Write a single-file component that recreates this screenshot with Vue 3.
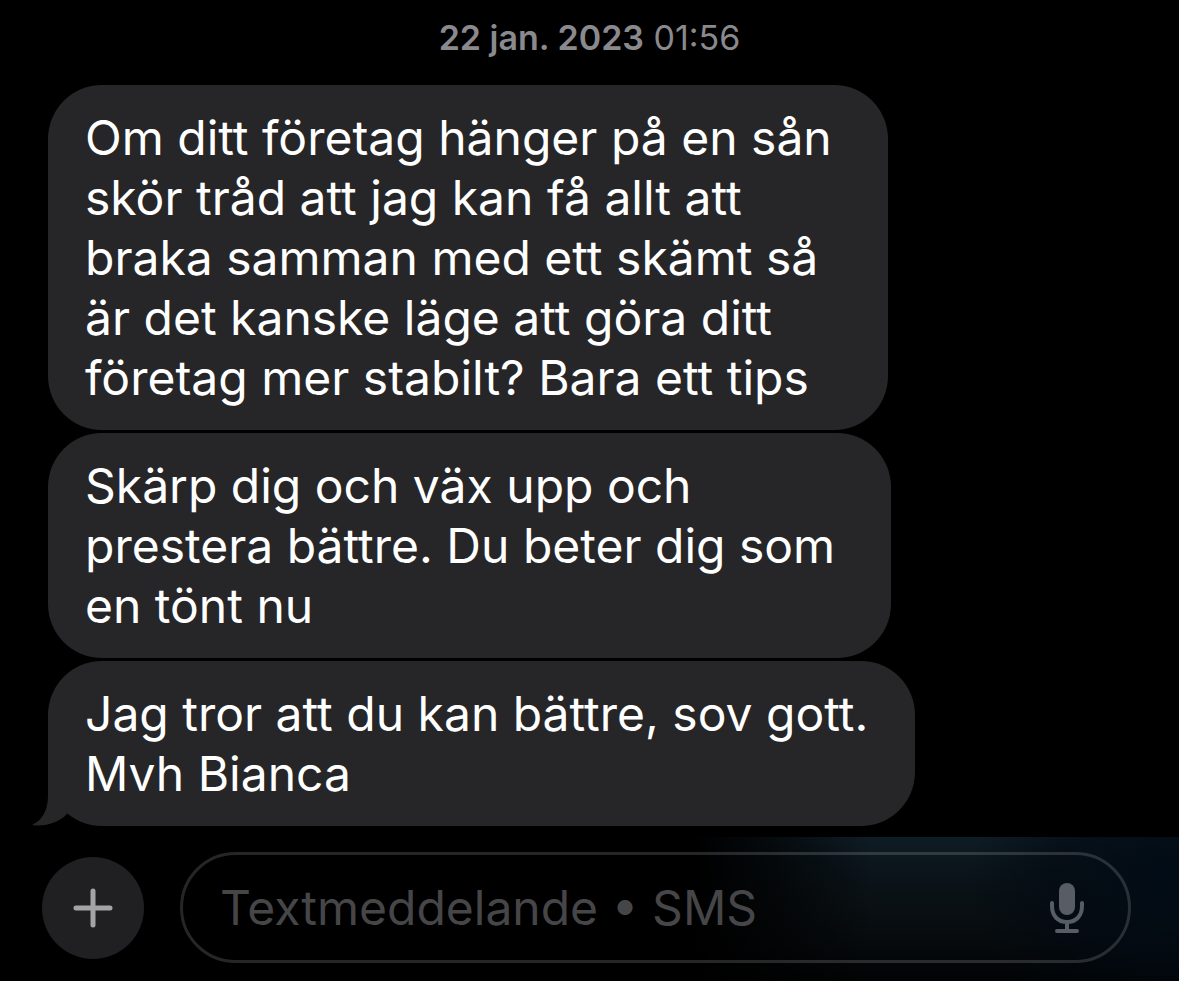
<template>
    <main class="chat">
        <section class="thread" aria-label="Konversation">
            <time class="stamp" datetime="2023-01-22T01:56"><strong>22 jan. 2023</strong> 01:56</time>

            <p
                v-for="(message, i) in messages"
                :key="i"
                class="bubble"
                :class="{ 'bubble-last': i === messages.length - 1 }"
            >{{ message.join('\n') }}<svg
                    v-if="i === messages.length - 1"
                    class="tail"
                    viewBox="0 0 36 56"
                    aria-hidden="true"
                >
                    <path d="M16 0V26C16 39 11 50 0 55C13 57 26 53 35 44L30 20Z" fill="#262628" />
                </svg></p>
        </section>

        <form class="composer" @submit.prevent>
            <button type="button" class="add" aria-label="Lägg till">
                <svg viewBox="0 0 40 40" width="40" height="40" aria-hidden="true">
                    <path
                        d="M20 3V37M3 20H37"
                        fill="none"
                        stroke="#a4a4a6"
                        stroke-width="5"
                        stroke-linecap="round"
                    />
                </svg>
            </button>

            <div class="field">
                <input
                    v-model="draft"
                    type="text"
                    class="field-input"
                    aria-label="Textmeddelande"
                    placeholder="Textmeddelande • SMS"
                />
                <button type="button" class="mic" aria-label="Diktera">
                    <svg viewBox="0 0 36 52" width="36" height="52" aria-hidden="true">
                        <rect x="10" y="1" width="16" height="32" rx="8" fill="#575c65" />
                        <path
                            d="M3 21V24C3 34 9 40 18 40C27 40 33 34 33 24V21M18 40V48M8 49H28"
                            fill="none"
                            stroke="#575c65"
                            stroke-width="4"
                            stroke-linecap="round"
                        />
                    </svg>
                </button>
            </div>
        </form>
    </main>
</template>

<script setup>
import { ref } from 'vue'

const draft = ref('')

const messages = [
    [
        'Om ditt företag hänger på en sån',
        'skör tråd att jag kan få allt att',
        'braka samman med ett skämt så',
        'är det kanske läge att göra ditt',
        'företag mer stabilt? Bara ett tips',
    ],
    [
        'Skärp dig och väx upp och',
        'prestera bättre. Du beter dig som',
        'en tönt nu',
    ],
    [
        'Jag tror att du kan bättre, sov gott.',
        'Mvh Bianca',
    ],
]
</script>

<style>
body {
    margin: 0;
    background: #000;
}
</style>

<style scoped>
.chat {
    display: flex;
    flex-direction: column;
    min-height: 100vh;
    background: #000;
    color: #fff;
    font-family: Inter, 'Liberation Sans', sans-serif;
}

.thread {
    display: flex;
    flex: 1;
    flex-direction: column;
    align-items: flex-start;
    gap: 3px;
    padding: 18px 48px 11px;
}

.stamp {
    align-self: center;
    margin-bottom: 24px;
    color: #8a8a8e;
    font-size: 34px;
    line-height: 40px;
}

.stamp strong {
    font-weight: 600;
}

.bubble {
    position: relative;
    box-sizing: border-box;
    margin: 0;
    padding: 23px 56px 22px 37px;
    border-radius: 54px;
    background: #262628;
    font-size: 48px;
    line-height: 60px;
    white-space: pre-line;
}

.bubble-last {
    padding-right: 47px;
}

/* small hook under the lower left corner of the last bubble */
.tail {
    position: absolute;
    bottom: 0;
    left: -16px;
    width: 36px;
    height: 56px;
}

/* the wallpaper glow shows through the right end of the bar */
.composer {
    display: flex;
    align-items: center;
    gap: 36px;
    padding: 15px 48px 18px 42px;
    background:
        linear-gradient(90deg, #000 59%, rgba(0, 0, 0, 0.6) 66%, transparent 74%),
        radial-gradient(ellipse 18% 110% at 100% 30%, #020c16 0%, rgba(2, 9, 17, 0.6) 60%, transparent 100%),
        linear-gradient(180deg, #0f1d26 0%, #0b161d 16%, #0a1115 40%, #060a0d 75%, #010304 100%);
}

.add {
    display: flex;
    flex: none;
    align-items: center;
    justify-content: center;
    width: 102px;
    height: 102px;
    padding: 0;
    border: 0;
    border-radius: 50%;
    background: #202022;
}

.field {
    display: flex;
    flex: 1;
    align-items: center;
    box-sizing: border-box;
    min-width: 0;
    height: 111px;
    padding: 0 43px 0 37px;
    border: 3px solid rgba(255, 255, 255, 0.15);
    border-radius: 56px;
}

.field-input {
    flex: 1;
    min-width: 0;
    height: 60px;
    padding: 0;
    border: 0;
    outline: 0;
    background: transparent;
    color: #fff;
    font-family: inherit;
    font-size: 48px;
}

.field-input::placeholder {
    color: #464648;
    opacity: 1;
}

.mic {
    display: flex;
    flex: none;
    padding: 0;
    border: 0;
    background: transparent;
}
</style>
